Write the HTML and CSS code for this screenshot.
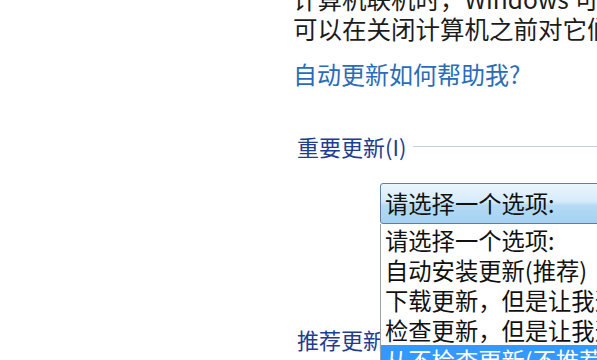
FILE: index.html
```html
<!DOCTYPE html>
<html lang="zh-CN">
<head>
<meta charset="utf-8">
<title>Windows Update 设置</title>
<link rel="stylesheet" href="styles.css">
</head>
<body>
<div class="content">
  <p class="para">计算机联机时，Windows 可以使用这些设置自动检查重要的更新并对它们进行安装。当有新的更新可用时，也<br>可以在关闭计算机之前对它们进行安装。</p>
  <a class="link" href="#">自动更新如何帮助我?</a>
  <div class="group-head"><span class="group-title">重要更新(I)</span><span class="group-rule"></span></div>
  <div class="select-wrap">
    <div class="field">请选择一个选项:</div>
    <ul class="list">
      <li class="item">请选择一个选项:</li>
      <li class="item">自动安装更新(推荐)</li>
      <li class="item">下载更新，但是让我选择是否安装更新</li>
      <li class="item">检查更新，但是让我选择是否下载和安装更新</li>
      <li class="item selected">从不检查更新(不推荐)</li>
    </ul>
  </div>
  <div class="group-head second"><span class="group-title">推荐更新</span><span class="group-rule"></span></div>
</div>
</body>
</html>
```
FILE: styles.css
```css
html, body {
  margin: 0;
  padding: 0;
}
body {
  width: 597px;
  height: 360px;
  overflow: hidden;
  background: #ffffff;
  font-family: "Noto Sans CJK SC", "Noto Sans", sans-serif;
  color: #1c1c1c;
}
.content {
  padding-left: 293px;
  display: flex;
  flex-direction: column;
  align-items: flex-start;
}
.para {
  margin: -16px 0 0 0;
  font-size: 24.5px;
  line-height: 30px;
  white-space: nowrap;
}
.latin {
  letter-spacing: 1px;
}
.link {
  margin-top: 15px;
  font-size: 24px;
  line-height: 30px;
  color: #2a6cba;
  text-decoration: none;
  white-space: nowrap;
}
.group-head {
  margin-top: 42px;
  display: flex;
  align-items: center;
  width: 400px;
  padding-left: 4px;
  gap: 7px;
}
.group-title {
  font-size: 22px;
  line-height: 30px;
  color: #1f3d8f;
  white-space: nowrap;
}
.group-rule {
  flex: 1;
  height: 1px;
  background: #c6cfdc;
  margin-top: 0;
}
.group-head.second {
  margin-top: 100px;
}
.select-wrap {
  position: relative;
  margin-left: 87px;
  margin-top: 22px;
  width: 400px;
}
.field {
  box-sizing: border-box;
  height: 41px;
  border: 1px solid #5f7f9e;
  border-radius: 3px 0 0 3px;
  background: linear-gradient(to bottom, #eaf5fd 0%, #d6ebfa 45%, #b4daf5 55%, #a5d2f2 100%);
  padding-left: 4px;
  font-size: 23.3px;
  line-height: 38px;
  white-space: nowrap;
  color: #111;
}
.list {
  position: absolute;
  top: 100%;
  left: 0;
  margin: 0;
  padding: 1px 0 0 0;
  list-style: none;
  width: 400px;
  background: #ffffff;
  border-left: 1px solid #9aa0a8;
  z-index: 2;
}
.item {
  height: 30px;
  padding-left: 4px;
  font-size: 23.3px;
  line-height: 30px;
  white-space: nowrap;
  color: #111;
}
.item.selected {
  background: #3399ff;
  color: #ffffff;
}
```
